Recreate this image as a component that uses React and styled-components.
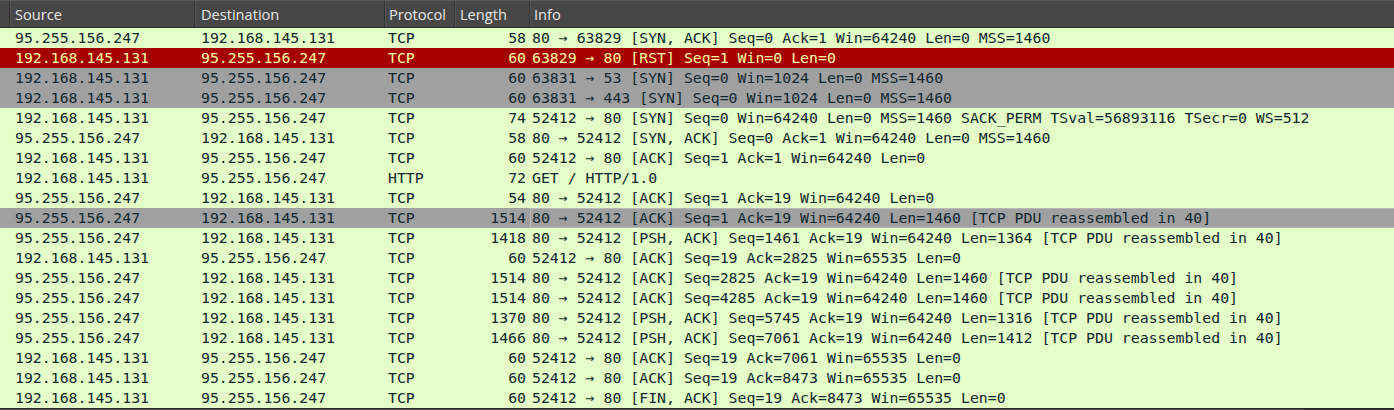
import React from 'react';
import styled, { createGlobalStyle, css } from 'styled-components';

const GlobalStyle = createGlobalStyle`
  html, body {
    margin: 0;
    padding: 0;
    background: #e4ffc7;
  }
`;

// column edges in the header: 10, 195, 385, 455, 530
const COLUMNS = '10px 185px 190px 70px 75px 1fr';

const List = styled.div`
  display: flex;
  flex-direction: column;
  width: 1394px;
  height: 410px;
  overflow: hidden;
`;

const Header = styled.div`
  display: grid;
  grid-template-columns: ${COLUMNS};
  height: 26px;
  background: #474747;
  border-top: 1px solid #5a5a5a;
  border-bottom: 1px solid #2b2b2b;
`;

const HeaderCell = styled.div`
  display: flex;
  align-items: center;
  padding-left: ${(p) => p.$pad ?? 5}px;
  border-right: 1px solid #323232;
  box-shadow: inset 1px 0 0 #545454;
  color: #e8e8e8;
  font-family: 'Open Sans', 'Noto Sans', sans-serif;
  font-size: 14.6px;
  white-space: nowrap;

  &:first-child {
    box-shadow: none;
  }

  &:last-child {
    border-right: none;
  }
`;

const rowColors = {
  normal: css`
    background: #e4ffc7;
    color: #12272e;
  `,
  rst: css`
    background: #a40000;
    color: #fffc9c;
  `,
  syn: css`
    background: #a0a0a0;
    color: #12272e;
  `,
  selected: css`
    background: #a0a0a0;
    color: #12272e;
  `,
};

const Row = styled.div`
  display: grid;
  grid-template-columns: ${COLUMNS};
  height: 20px;
  line-height: 20px;
  font-family: 'DejaVu Sans Mono', 'Liberation Mono', monospace;
  font-size: 14.85px;
  ${(p) => rowColors[p.$kind]}
`;

const Cell = styled.div`
  padding-left: ${(p) => p.$pad ?? 5}px;
  white-space: nowrap;
  overflow: hidden;
`;

const LengthCell = styled.div`
  padding-right: 4px;
  text-align: right;
  white-space: nowrap;
`;

const InfoCell = styled.div`
  padding-left: 2px;
  white-space: nowrap;
  overflow: hidden;
  ${(p) =>
    p.$focused &&
    css`
      box-shadow: inset 1px 0 0 #b8b8b8, inset 0 1px 0 #b8b8b8, inset 0 -1px 0 #b8b8b8;
    `}
`;

const Bottom = styled.div`
  display: flex;
  height: 1px;
  border-top: 1px solid #262626;
`;

const ScrollThumb = styled.div`
  width: 1304px;
  background: #585858;
`;

const ScrollTrack = styled.div`
  flex: 1;
  background: #353535;
`;

const A = '95.255.156.247';
const B = '192.168.145.131';

const packets = [
  [A, B, 'TCP', 58, '80 → 63829 [SYN, ACK] Seq=0 Ack=1 Win=64240 Len=0 MSS=1460', 'normal'],
  [B, A, 'TCP', 60, '63829 → 80 [RST] Seq=1 Win=0 Len=0', 'rst'],
  [B, A, 'TCP', 60, '63831 → 53 [SYN] Seq=0 Win=1024 Len=0 MSS=1460', 'syn'],
  [B, A, 'TCP', 60, '63831 → 443 [SYN] Seq=0 Win=1024 Len=0 MSS=1460', 'syn'],
  [B, A, 'TCP', 74, '52412 → 80 [SYN] Seq=0 Win=64240 Len=0 MSS=1460 SACK_PERM TSval=56893116 TSecr=0 WS=512', 'normal'],
  [A, B, 'TCP', 58, '80 → 52412 [SYN, ACK] Seq=0 Ack=1 Win=64240 Len=0 MSS=1460', 'normal'],
  [B, A, 'TCP', 60, '52412 → 80 [ACK] Seq=1 Ack=1 Win=64240 Len=0', 'normal'],
  [B, A, 'HTTP', 72, 'GET / HTTP/1.0', 'normal'],
  [A, B, 'TCP', 54, '80 → 52412 [ACK] Seq=1 Ack=19 Win=64240 Len=0', 'normal'],
  [A, B, 'TCP', 1514, '80 → 52412 [ACK] Seq=1 Ack=19 Win=64240 Len=1460 [TCP PDU reassembled in 40]', 'selected'],
  [A, B, 'TCP', 1418, '80 → 52412 [PSH, ACK] Seq=1461 Ack=19 Win=64240 Len=1364 [TCP PDU reassembled in 40]', 'normal'],
  [B, A, 'TCP', 60, '52412 → 80 [ACK] Seq=19 Ack=2825 Win=65535 Len=0', 'normal'],
  [A, B, 'TCP', 1514, '80 → 52412 [ACK] Seq=2825 Ack=19 Win=64240 Len=1460 [TCP PDU reassembled in 40]', 'normal'],
  [A, B, 'TCP', 1514, '80 → 52412 [ACK] Seq=4285 Ack=19 Win=64240 Len=1460 [TCP PDU reassembled in 40]', 'normal'],
  [A, B, 'TCP', 1370, '80 → 52412 [PSH, ACK] Seq=5745 Ack=19 Win=64240 Len=1316 [TCP PDU reassembled in 40]', 'normal'],
  [A, B, 'TCP', 1466, '80 → 52412 [PSH, ACK] Seq=7061 Ack=19 Win=64240 Len=1412 [TCP PDU reassembled in 40]', 'normal'],
  [B, A, 'TCP', 60, '52412 → 80 [ACK] Seq=19 Ack=7061 Win=65535 Len=0', 'normal'],
  [B, A, 'TCP', 60, '52412 → 80 [ACK] Seq=19 Ack=8473 Win=65535 Len=0', 'normal'],
  [B, A, 'TCP', 60, '52412 → 80 [FIN, ACK] Seq=19 Ack=8473 Win=65535 Len=0', 'normal'],
];

function App() {
  return (
    <>
      <GlobalStyle />
      <List>
        <Header>
          <HeaderCell />
          <HeaderCell>Source</HeaderCell>
          <HeaderCell $pad={6}>Destination</HeaderCell>
          <HeaderCell $pad={4}>Protocol</HeaderCell>
          <HeaderCell>Length</HeaderCell>
          <HeaderCell $pad={4}>Info</HeaderCell>
        </Header>
        {packets.map(([src, dst, proto, len, info, kind], i) => (
          <Row key={i} $kind={kind}>
            <Cell />
            <Cell>{src}</Cell>
            <Cell $pad={6}>{dst}</Cell>
            <Cell $pad={3}>{proto}</Cell>
            <LengthCell>{len}</LengthCell>
            <InfoCell $focused={kind === 'selected'}>{info}</InfoCell>
          </Row>
        ))}
        <Bottom>
          <ScrollThumb />
          <ScrollTrack />
        </Bottom>
      </List>
    </>
  );
}

export default App;
